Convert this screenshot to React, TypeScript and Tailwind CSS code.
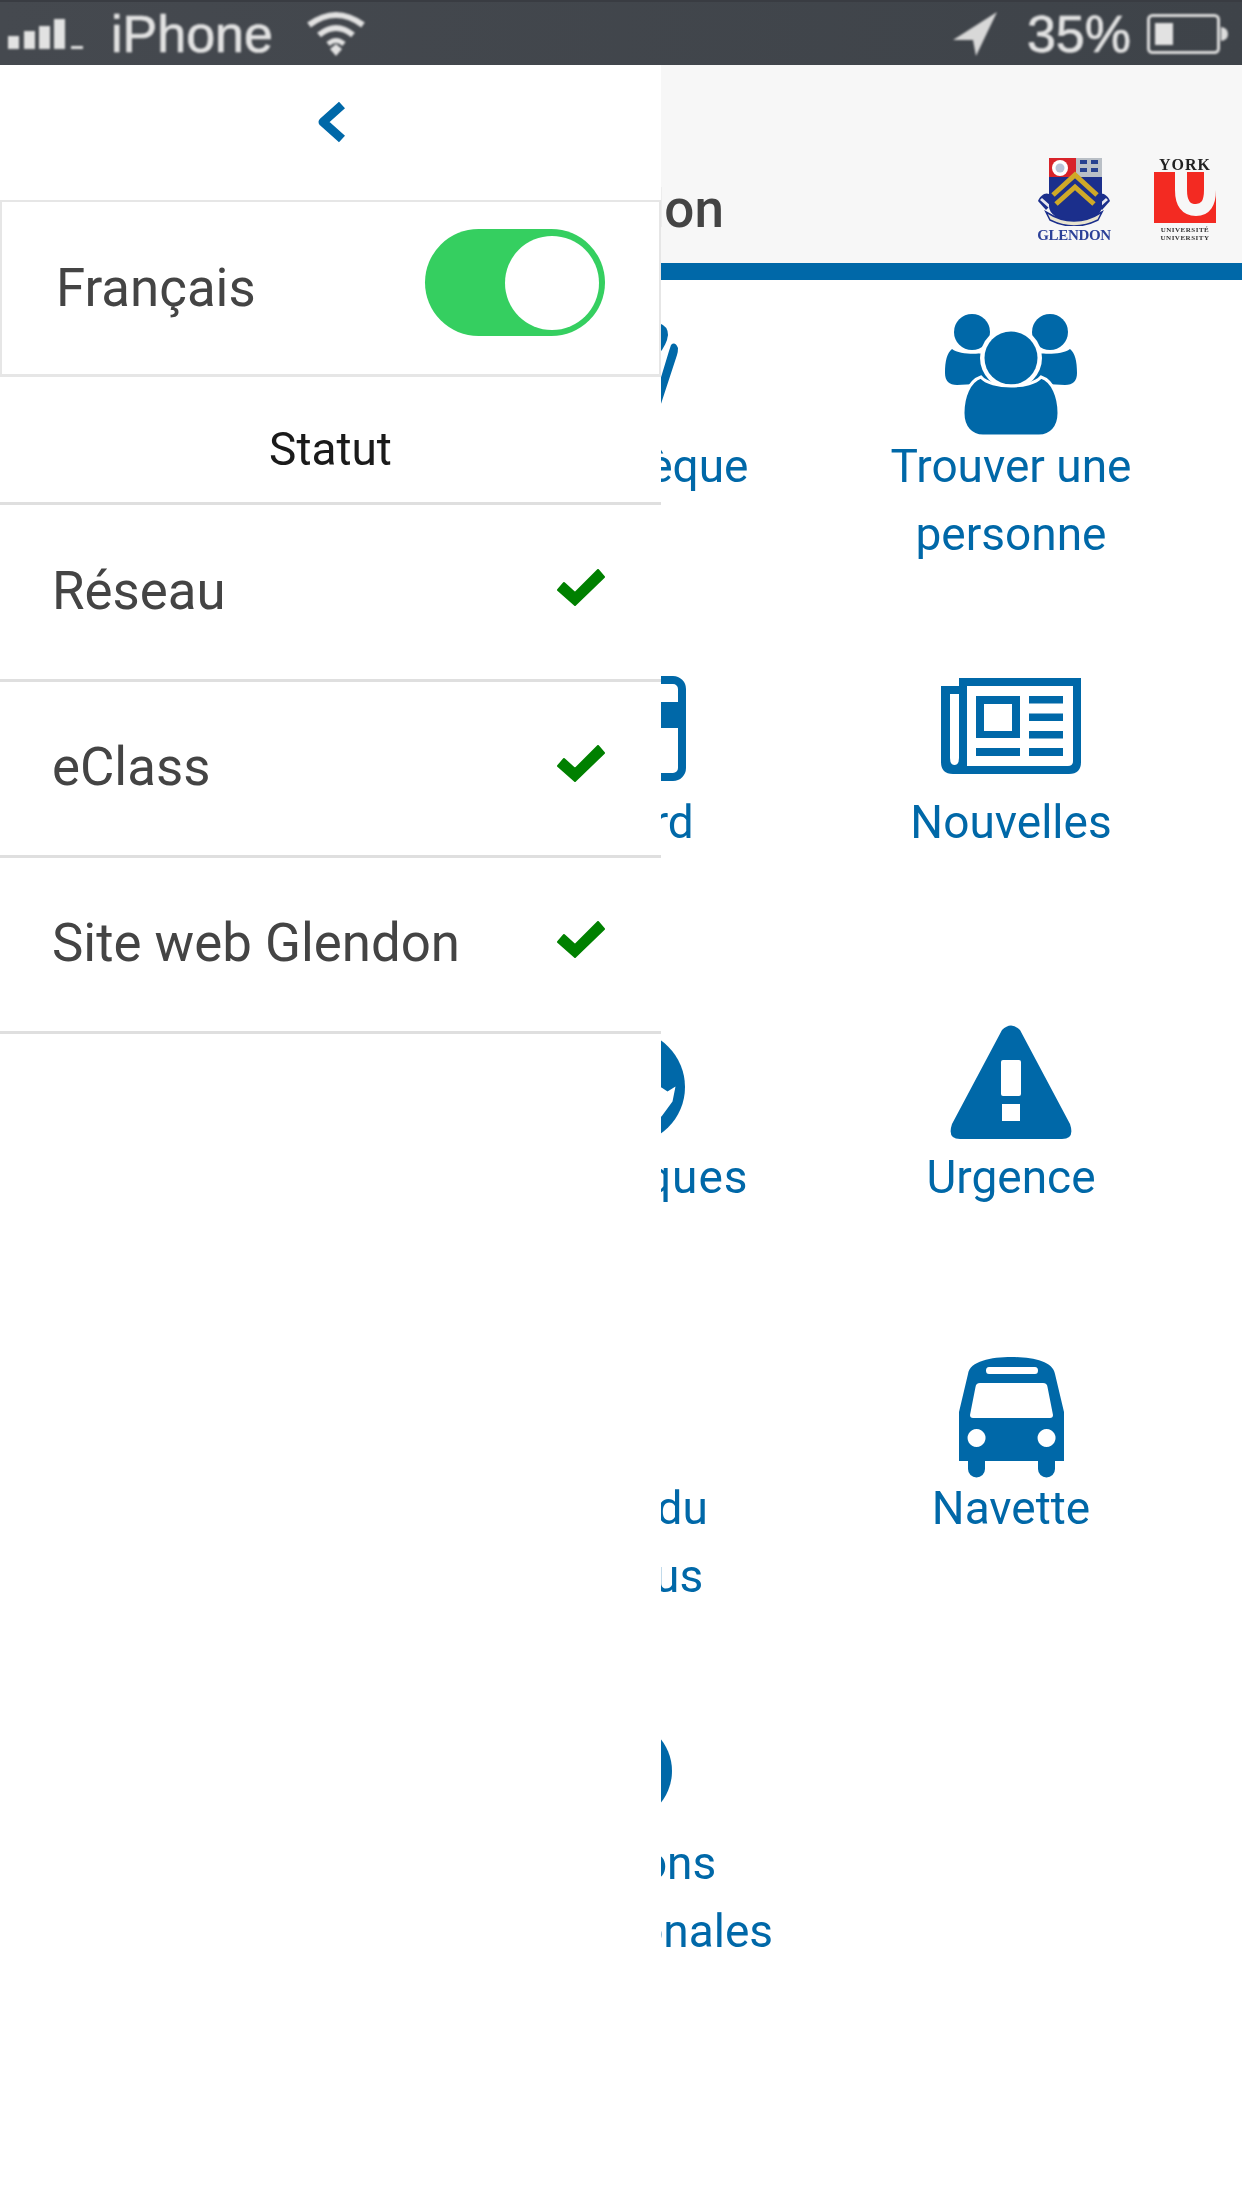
import React from "react";

const B = "#0068a8";

function People() {
  return (
    <svg width="132" height="124" viewBox="0 0 132 124" className="block">
      <circle cx="27" cy="19" r="18" fill={B} />
      <circle cx="105" cy="19" r="18" fill={B} />
      <path d="M7 36 C15 42 38 42 44 38 L50 70 L12 72 C4 72 0 68 0 60 C0 48 2 40 7 36Z" fill={B} />
      <path d="M125 36 C117 42 94 42 88 38 L82 70 L120 72 C128 72 132 68 132 60 C132 48 130 40 125 36Z" fill={B} />
      <circle cx="66" cy="45" r="31" fill="#fff" />
      <circle cx="66" cy="45" r="26.5" fill={B} />
      <path d="M36 64 C46 76 86 76 96 64 C108 68 114 84 114 100 C114 114 106 123 94 123 L38 123 C26 123 18 114 18 100 C18 84 24 68 36 64Z" fill={B} stroke="#fff" strokeWidth="3" />
    </svg>
  );
}

function News() {
  return (
    <svg width="140" height="96" viewBox="0 0 140 96" className="block">
      <path fillRule="evenodd" fill={B} d="M18 0H140V84Q140 96 128 96H12Q0 96 0 84V8H18ZM26 8V88H127Q132 88 132 83V8ZM9 16V80Q9 87 13.500 87Q18 87 18 80V16Z" />
      <path fillRule="evenodd" fill={B} d="M35 18H79V60H35ZM43 26V53H71V26Z" />
      <rect x="88" y="18" width="34" height="7.500" fill={B} />
      <rect x="88" y="35.500" width="34" height="7.500" fill={B} />
      <rect x="88" y="53" width="34" height="7.500" fill={B} />
      <rect x="88" y="70" width="34" height="8" fill={B} />
      <rect x="35" y="70" width="44" height="8" fill={B} />
    </svg>
  );
}

function Warn() {
  return (
    <svg width="122" height="114" viewBox="0 0 122 114" className="block">
      <path fillRule="evenodd" fill={B} d="M52 5Q61 -4 70 5L120 99Q125 114 112 114H10Q-3 114 2 99ZM51 37Q51 35 53 35H69Q71 35 71 37V69Q71 71 69 71H53Q51 71 51 69ZM52 79H70V96H52Z" />
    </svg>
  );
}

function Bus() {
  return (
    <svg width="105" height="121" viewBox="0 0 105 121" className="block">
      <path fillRule="evenodd" fill={B} d="M9 17C11 4 32 0 52.500 0C73 0 94 4 96 17L105 55V104H96V112A8.500 8.500 0 0 1 79 112V104H26V112A8.500 8.500 0 0 1 9 112V104H0V55ZM30 10Q27 10 27 13.500Q27 17 30 17H76Q79 17 79 13.500Q79 10 76 10ZM21 26Q17 26 16.500 30L11 58Q11 61 14 61H91Q94 61 94 58L88.500 30Q88 26 84 26ZM17.500 72A9 9 0 1 0 17.600 72ZM87.500 72A9 9 0 1 0 87.600 72Z" />
    </svg>
  );
}

function Library() {
  return (
    <svg width="140" height="90" viewBox="0 0 140 90" className="block">
      <path d="M108 5Q117 8 117 17Q116 26 108 36Z" fill={B} />
      <path d="M120 27Q124 23 127 30Q127 34 126 37L108 92L108 66L118 33Z" fill={B} />
    </svg>
  );
}

function Card() {
  return (
    <svg width="130" height="105" viewBox="0 0 130 105" className="block">
      <rect x="4" y="4" width="122" height="97" rx="9" fill="none" stroke={B} strokeWidth="8" />
      <rect x="0" y="26" width="130" height="26" fill={B} />
    </svg>
  );
}

function PhoneCircle() {
  return (
    <svg width="114" height="114" viewBox="0 0 114 114" className="block">
      <circle cx="57" cy="57" r="57" fill={B} />
      <path d="M60 57.500L90.500 57.500L96.500 61.500L104.500 56.500L101.500 71.500L90.500 86.500L60 90Z" fill="#fff" />
    </svg>
  );
}

function Globe() {
  return (
    <svg width="102" height="102" viewBox="0 0 102 102" className="block">
      <circle cx="51" cy="51" r="51" fill={B} />
    </svg>
  );
}

function Check() {
  return (
    <svg width="48" height="37" viewBox="0 0 48 37" className="block">
      <path d="M1 21L7 14L18 24L41 1L47 8L18 36Z" fill="#008000" stroke="#008000" strokeWidth="2" strokeLinejoin="round" />
    </svg>
  );
}

function GlendonLogo() {
  return (
    <div className="flex flex-col items-center w-[76px] blur-[0.7px]">
      <svg width="76" height="68" viewBox="0 0 76 68" className="block">
        <path d="M2 43C4 38 9 34 13 36L18 44L10 52Z" fill="#1b2f8c" />
        <path d="M74 43C72 38 67 34 63 36L58 44L66 52Z" fill="#1b2f8c" />
        <path d="M5 41L14 49M71 41L62 49" stroke="#e8e8f0" strokeWidth="3" />
        <rect x="13" y="0" width="27" height="19" fill="#d8232a" />
        <circle cx="24" cy="10" r="8" fill="#fff" />
        <circle cx="24" cy="10" r="4.500" fill="#b8c4d8" />
        <rect x="40" y="0" width="26" height="19" fill="#b9bfc6" />
        <path d="M44 4H51M55 4H62M44 12H51M55 12H62" stroke="#26408f" strokeWidth="4" />
        <path d="M13 19H66V48Q66 60 39 66Q13 60 13 48Z" fill="#1b2f8c" />
        <path d="M17 37L39 17L61 37M20 46L39 29L58 46" fill="none" stroke="#cfa928" strokeWidth="5" />
        <path d="M10 54Q38 72 66 54L62 62Q38 74 14 62Z" fill="#e8e4cf" stroke="#1b2f8c" strokeWidth="1.500" />
      </svg>
      <span className="mt-[3px] text-[15px] leading-[13px] tracking-[-0.3px] text-[#2c4198] font-bold" style={{ fontFamily: "'Liberation Serif', serif" }}>GLENDON</span>
    </div>
  );
}

function YorkLogo() {
  return (
    <div className="flex flex-col items-center w-[62px] blur-[0.7px]" style={{ fontFamily: "'Liberation Serif', serif" }}>
      <span className="text-[16px] leading-[13px] font-bold text-[#222] tracking-[1px]">YORK</span>
      <svg width="62" height="51" viewBox="0 0 62 51" className="block mt-[1px]">
        <rect x="0" y="0" width="62" height="51" fill="#f32a22" />
        <path d="M27 -2V18Q27 38 42 38Q56 38 56 18V-2" fill="none" stroke="#f7f7f7" strokeWidth="12" />
      </svg>
      <div className="mt-[3px] text-[7px] leading-[8px] font-bold text-[#333] tracking-[0.5px] whitespace-nowrap">UNIVERSITÉ</div>
      <div className="text-[7px] leading-[8px] font-bold text-[#333] tracking-[0.5px] whitespace-nowrap">UNIVERSITY</div>
    </div>
  );
}

function Cell({ lines, icon, mb, wide }: { lines: string[]; icon?: React.ReactNode; mb: string; wide?: boolean }) {
  return (
    <div className="flex flex-col items-center">
      <div className="h-[152px] flex items-end justify-center">
        <div className={mb}>{icon}</div>
      </div>
      <div className={`${wide ? "tracking-[1px]" : ""} text-[46px] leading-[68px] text-center text-[#0068a8] whitespace-nowrap blur-[0.5px]`}>
        {lines.map((l) => (
          <div key={l}>{l}</div>
        ))}
      </div>
    </div>
  );
}

function StatusBar() {
  return (
    <div className="h-[65px] bg-[linear-gradient(90deg,#45494f,#3e4349)] border-t-2 border-[#393c42] flex items-center text-[#e2e2e2] relative" style={{ fontFamily: "'Liberation Sans', sans-serif" }}>
      <div className="flex items-center w-full blur-[0.8px]">
        <svg width="76" height="34" viewBox="0 0 76 34" className="block ml-[8px]">
          <rect x="0" y="19" width="11" height="13" fill="#e2e2e2" />
          <rect x="16" y="14" width="11" height="18" fill="#e2e2e2" />
          <rect x="31" y="9" width="11" height="23" fill="#e2e2e2" />
          <rect x="46" y="2" width="11" height="30" fill="#e2e2e2" />
          <rect x="63" y="29" width="12" height="3" fill="#e2e2e2" />
        </svg>
        <span className="ml-[27px] text-[52px] leading-[46px] [-webkit-text-stroke:0.7px_#e2e2e2]">iPhone</span>
        <svg width="60" height="46" viewBox="0 0 60 46" className="block ml-[33px]">
          <path d="M3 14Q30 -6 57 14" fill="none" stroke="#e2e2e2" strokeWidth="6" />
          <path d="M13 24Q30 10 47 24" fill="none" stroke="#e2e2e2" strokeWidth="6" />
          <path d="M22 33Q30 26 38 33" fill="none" stroke="#e2e2e2" strokeWidth="5" />
          <path d="M24 38L30 33L36 38L30 45Z" fill="#e2e2e2" />
        </svg>
        <svg width="44" height="44" viewBox="0 0 44 44" className="block ml-auto">
          <path d="M44 0L0 28L20 28L23 44Z" fill="#d8d8d8" />
        </svg>
        <span className="ml-[30px] text-[52px] leading-[46px] [-webkit-text-stroke:0.7px_#e2e2e2]">35%</span>
        <svg width="82" height="40" viewBox="0 0 82 40" className="block ml-[16px] mr-[13px]">
          <rect x="1.500" y="1.500" width="70" height="37" rx="4" fill="none" stroke="#dcdcdc" strokeWidth="3" />
          <rect x="8" y="9" width="18" height="22" fill="#e2e2e2" />
          <path d="M74 13Q81 14 81 20Q81 26 74 27Z" fill="#dcdcdc" />
        </svg>
      </div>
    </div>
  );
}

function Row({ label, tall }: { label: string; tall?: boolean }) {
  return (
    <div className={`${tall ? "h-[177px]" : "h-[176px]"} border-b-[3px] border-[#dfdfdf] flex items-center justify-between pl-[52px] pr-[56px]`}>
      <span className="-mt-[2px] text-[52.800px] leading-none text-[#444] blur-[0.5px]">{label}</span>
      <span className="-mt-[10px]">
        <Check />
      </span>
    </div>
  );
}

export default function App() {
  return (
    <div className="relative w-[1242px] h-[2208px] bg-white overflow-hidden" style={{ fontFamily: "Roboto, sans-serif" }}>
      <StatusBar />

      <header className="h-[198px] bg-[#f7f7f7] flex items-start pl-[527px] pr-[26px]">
        <span className="mt-[117px] text-[53px] leading-[54px] font-medium text-[#444] blur-[0.5px]">Glendon</span>
        <div className="ml-auto mt-[93px] flex items-start gap-[42px]">
          <GlendonLogo />
          <YorkLogo />
        </div>
      </header>
      <div className="h-[17px] bg-[#0068a8]" />

      <main className="grid grid-cols-[390px_390px_390px] grid-rows-[356px_355px_331px_355px_auto] pl-[36px]">
        <div />
        <Cell lines={["Bibliothèque"]} icon={<Library />} mb="mb-[24px]" />
        <Cell lines={["Trouver une", "personne"]} icon={<People />} mb="-mb-[5px]" />
        <div />
        <Cell lines={["YUcard"]} icon={<Card />} mb="mb-[7px]" />
        <Cell lines={["Nouvelles"]} icon={<News />} mb="mb-[14px]" />
        <div />
        <Cell lines={["Statistiques"]} wide icon={<PhoneCircle />} mb="-mb-[1px] ml-[13px]" />
        <Cell lines={["Urgence"]} icon={<Warn />} mb="mb-[4px]" />
        <div />
        <Cell lines={["Carte du", "campus"]} mb="mb-0" />
        <Cell lines={["Navette"]} icon={<Bus />} mb="-mb-[4px]" />
        <div />
        <Cell lines={["Relations", "internationales"]} icon={<Globe />} mb="mb-[7px]" />
        <div />
      </main>

      <aside className="absolute left-0 top-[65px] bottom-0 w-[661px] bg-white">
        <div className="h-[135px] flex items-start justify-center">
          <svg width="30" height="44" viewBox="0 0 30 44" className="block mt-[35px]">
            <path d="M26 5L7 22L26 39" fill="none" stroke="#0068a8" strokeWidth="9" strokeLinejoin="round" />
          </svg>
        </div>
        <div className="h-[177px] border-[2px] border-b-[3px] border-[#e6e6e6] flex items-center justify-between pl-[54px] pr-[54px]">
          <span className="text-[52.800px] leading-none text-[#444] blur-[0.5px]">Français</span>
          <div className="w-[180px] h-[107px] -mt-[11px] rounded-full bg-[#35cf60] flex items-center justify-end pr-[6px]">
            <div className="w-[94px] h-[94px] rounded-full bg-white" />
          </div>
        </div>
        <div className="h-[128px] border-b-[3px] border-[#dfdfdf] flex items-center justify-center">
          <span className="mt-[18px] text-[46px] leading-none text-[#1a1a1a] blur-[0.4px]">Statut</span>
        </div>
        <Row label="Réseau" tall />
        <Row label="eClass" />
        <Row label="Site web Glendon" />
      </aside>
    </div>
  );
}
